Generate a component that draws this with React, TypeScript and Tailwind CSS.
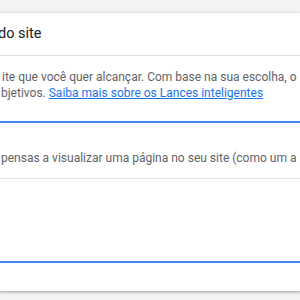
export default function App() {
  return (
    <div className="min-h-[300px] w-[300px] overflow-hidden bg-[#f1f3f4] pt-[13px] font-['Roboto',sans-serif]">
      <div className="h-[278px] bg-white shadow-[0_1px_2px_rgba(60,64,67,0.3),0_1px_3px_1px_rgba(60,64,67,0.15)]">
        <div className="flex h-[43px] items-center border-b border-[#e0e0e0] whitespace-nowrap">
          <h2 className="-ml-[2px] text-[14.5px] leading-5 text-[#202124]">
            do site
          </h2>
        </div>

        <div className="border-b-2 border-[#4285f4] pt-[13px] pb-[20px] text-[12px] leading-4 whitespace-nowrap text-[#5f6368]">
          <p className="ml-[2px]">ite que você quer alcançar. Com base na sua escolha, o</p>
          <p className="ml-[1px]">
            bjetivos.{" "}
            <a href="#" className="text-[#1a73e8] underline">
              Saiba mais sobre os Lances inteligentes
            </a>
          </p>
        </div>

        <div className="flex h-[56px] items-end border-b border-[#e0e0e0] pb-[12px] text-[12px] leading-4 whitespace-nowrap text-[#5f6368]">
          <p className="ml-[1px]">pensas a visualizar uma página no seu site (como um a</p>
        </div>

        <div className="h-[84px] border-b-2 border-[#4285f4]" />
      </div>
    </div>
  );
}
